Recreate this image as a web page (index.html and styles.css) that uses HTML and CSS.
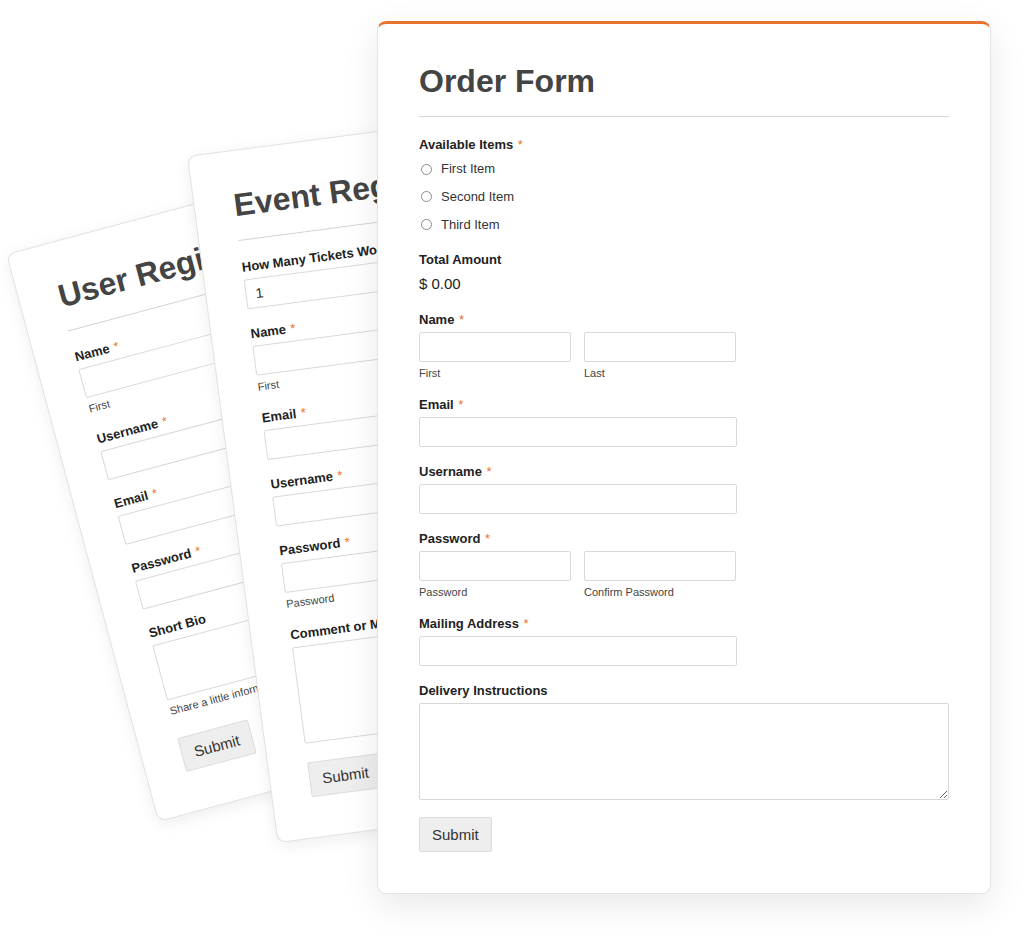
FILE: index.html
```html
<!DOCTYPE html>
<html lang="en">
<head>
<meta charset="utf-8">
<title>Forms</title>
<link rel="stylesheet" href="styles.css">
</head>
<body>
<div class="stage">

  <section class="card card-back card-user">
    <h2 class="title">User Registration</h2>
    <div class="divider"></div>
    <div class="field">
      <span class="label">Name <span class="req">*</span></span>
      <div class="row">
        <div class="col"><input class="input" type="text"><span class="sub">First</span></div>
        <div class="col"><input class="input" type="text"><span class="sub">Last</span></div>
      </div>
    </div>
    <div class="field">
      <span class="label">Username <span class="req">*</span></span>
      <input class="input input-md" type="text">
    </div>
    <div class="field">
      <span class="label">Email <span class="req">*</span></span>
      <input class="input input-md" type="text">
    </div>
    <div class="field">
      <span class="label">Password <span class="req">*</span></span>
      <input class="input input-md" type="password">
    </div>
    <div class="field field-bio">
      <span class="label">Short Bio</span>
      <textarea class="textarea textarea-sm"></textarea>
      <span class="sub">Share a little information about yourself.</span>
    </div>
    <button class="button" type="button">Submit</button>
  </section>

  <section class="card card-back card-event">
    <h2 class="title">Event Registration</h2>
    <div class="divider"></div>
    <div class="field">
      <span class="label">How Many Tickets Would You Like?</span>
      <input class="input input-md" type="text" value="1">
    </div>
    <div class="field">
      <span class="label">Name <span class="req">*</span></span>
      <div class="row">
        <div class="col"><input class="input" type="text"><span class="sub">First</span></div>
        <div class="col"><input class="input" type="text"><span class="sub">Last</span></div>
      </div>
    </div>
    <div class="field">
      <span class="label">Email <span class="req">*</span></span>
      <input class="input input-md" type="text">
    </div>
    <div class="field">
      <span class="label">Username <span class="req">*</span></span>
      <input class="input input-md" type="text">
    </div>
    <div class="field">
      <span class="label">Password <span class="req">*</span></span>
      <div class="row">
        <div class="col"><input class="input" type="password"><span class="sub">Password</span></div>
        <div class="col"><input class="input" type="password"><span class="sub">Confirm Password</span></div>
      </div>
    </div>
    <div class="field field-comment">
      <span class="label">Comment or Message</span>
      <textarea class="textarea"></textarea>
    </div>
    <button class="button" type="button">Submit</button>
  </section>

  <section class="card card-main">
    <h1 class="title">Order Form</h1>
    <div class="divider divider-main"></div>
    <div class="field field-items">
      <span class="label">Available Items <span class="req">*</span></span>
      <div class="options">
        <div class="option"><span class="radio"></span>First Item</div>
        <div class="option"><span class="radio"></span>Second Item</div>
        <div class="option"><span class="radio"></span>Third Item</div>
      </div>
    </div>
    <div class="field field-total">
      <span class="label">Total Amount</span>
      <div class="amount">$ 0.00</div>
    </div>
    <div class="field">
      <span class="label">Name <span class="req">*</span></span>
      <div class="row">
        <div class="col"><input class="input" type="text"><span class="sub">First</span></div>
        <div class="col"><input class="input" type="text"><span class="sub">Last</span></div>
      </div>
    </div>
    <div class="field">
      <span class="label">Email <span class="req">*</span></span>
      <input class="input input-md" type="text">
    </div>
    <div class="field">
      <span class="label">Username <span class="req">*</span></span>
      <input class="input input-md" type="text">
    </div>
    <div class="field">
      <span class="label">Password <span class="req">*</span></span>
      <div class="row">
        <div class="col"><input class="input" type="password"><span class="sub">Password</span></div>
        <div class="col"><input class="input" type="password"><span class="sub">Confirm Password</span></div>
      </div>
    </div>
    <div class="field">
      <span class="label">Mailing Address <span class="req">*</span></span>
      <input class="input input-md" type="text">
    </div>
    <div class="field">
      <span class="label">Delivery Instructions</span>
      <textarea class="textarea"></textarea>
    </div>
    <button class="button" type="button">Submit</button>
  </section>

</div>
</body>
</html>
```

FILE: styles.css
```css
* {
  box-sizing: border-box;
}

html, body {
  margin: 0;
  background: #ffffff;
}

body {
  font-family: "Liberation Sans", Arial, sans-serif;
  color: #222222;
}

.stage {
  position: relative;
  width: 1024px;
  height: 938px;
  padding: 21px 0 0 377px;
  overflow: hidden;
}

.card {
  background: #ffffff;
  border-radius: 9px;
}

.card-main {
  position: relative;
  z-index: 3;
  width: 614px;
  border: 1px solid #e4e4e4;
  border-top: 3px solid #e8732f;
  padding: 38px 41px 41px 41px;
  box-shadow: 0 12px 36px rgba(0, 0, 0, 0.09);
}

.card-back {
  position: absolute;
  transform-origin: 0 0;
  width: 420px;
  border: 1px solid #e2e2e2;
  padding: 35px 39px 40px 39px;
  box-shadow: 0 4px 16px rgba(0, 0, 0, 0.07);
}

.card-event {
  left: 187px;
  top: 156px;
  z-index: 2;
  transform: rotate(-7.5deg);
}

.card-user {
  left: 6px;
  top: 254px;
  z-index: 1;
  transform: rotate(-15deg);
}

.title {
  margin: 0;
  font-size: 32px;
  line-height: 38px;
  font-weight: 700;
  color: #444444;
  white-space: nowrap;
}

.divider {
  height: 1px;
  background: #d4d4d4;
  margin: 16px 0 19px 0;
}

.divider-main {
  margin-bottom: 20px;
}

.field {
  margin-bottom: 17px;
}

.field-items {
  margin-bottom: 19.5px;
}

.field-total {
  margin-bottom: 18px;
}

.field-bio {
  margin-bottom: 21px;
}

.field-comment {
  margin-bottom: 19px;
}

.label {
  display: block;
  font-size: 13px;
  line-height: 16px;
  font-weight: 700;
  color: #222222;
  white-space: nowrap;
}

.req {
  color: #e8732f;
  font-weight: 400;
  margin-left: 1px;
}

.options {
  margin-top: 8px;
  display: flex;
  flex-direction: column;
  gap: 11.75px;
}

.option {
  display: flex;
  align-items: center;
  font-size: 13px;
  line-height: 16px;
  color: #333333;
}

.radio {
  width: 11px;
  height: 11px;
  border: 1px solid #8c8c8c;
  border-radius: 50%;
  margin: 0 9px 0 2px;
  flex: none;
}

.amount {
  margin-top: 6px;
  font-size: 15px;
  line-height: 20px;
  color: #222222;
}

.row {
  display: flex;
  gap: 13px;
  margin-top: 4px;
}

.col {
  width: 152px;
}

.input {
  display: block;
  width: 100%;
  height: 30px;
  margin: 0;
  padding: 0 9px;
  border: 1px solid #d9d9d9;
  border-radius: 2px;
  background: #ffffff;
  font: 14px "Liberation Sans", Arial, sans-serif;
  color: #333333;
  outline: none;
}

.input-md {
  width: 318px;
  margin-top: 4px;
}

.sub {
  display: block;
  margin-top: 5px;
  font-size: 11px;
  line-height: 13px;
  color: #444444;
  white-space: nowrap;
}

.textarea {
  display: block;
  width: 100%;
  height: 97px;
  margin: 4px 0 0 0;
  padding: 6px 9px;
  border: 1px solid #d9d9d9;
  border-radius: 2px;
  background: #ffffff;
  font: 14px "Liberation Sans", Arial, sans-serif;
  outline: none;
}

.textarea-sm {
  height: 57px;
}

.button {
  display: block;
  height: 35px;
  margin: 0;
  padding: 0 12px;
  background: #eeeeee;
  border: 1px solid #dcdcdc;
  border-radius: 2px;
  font: 15px "Liberation Sans", Arial, sans-serif;
  color: #333333;
}
```
